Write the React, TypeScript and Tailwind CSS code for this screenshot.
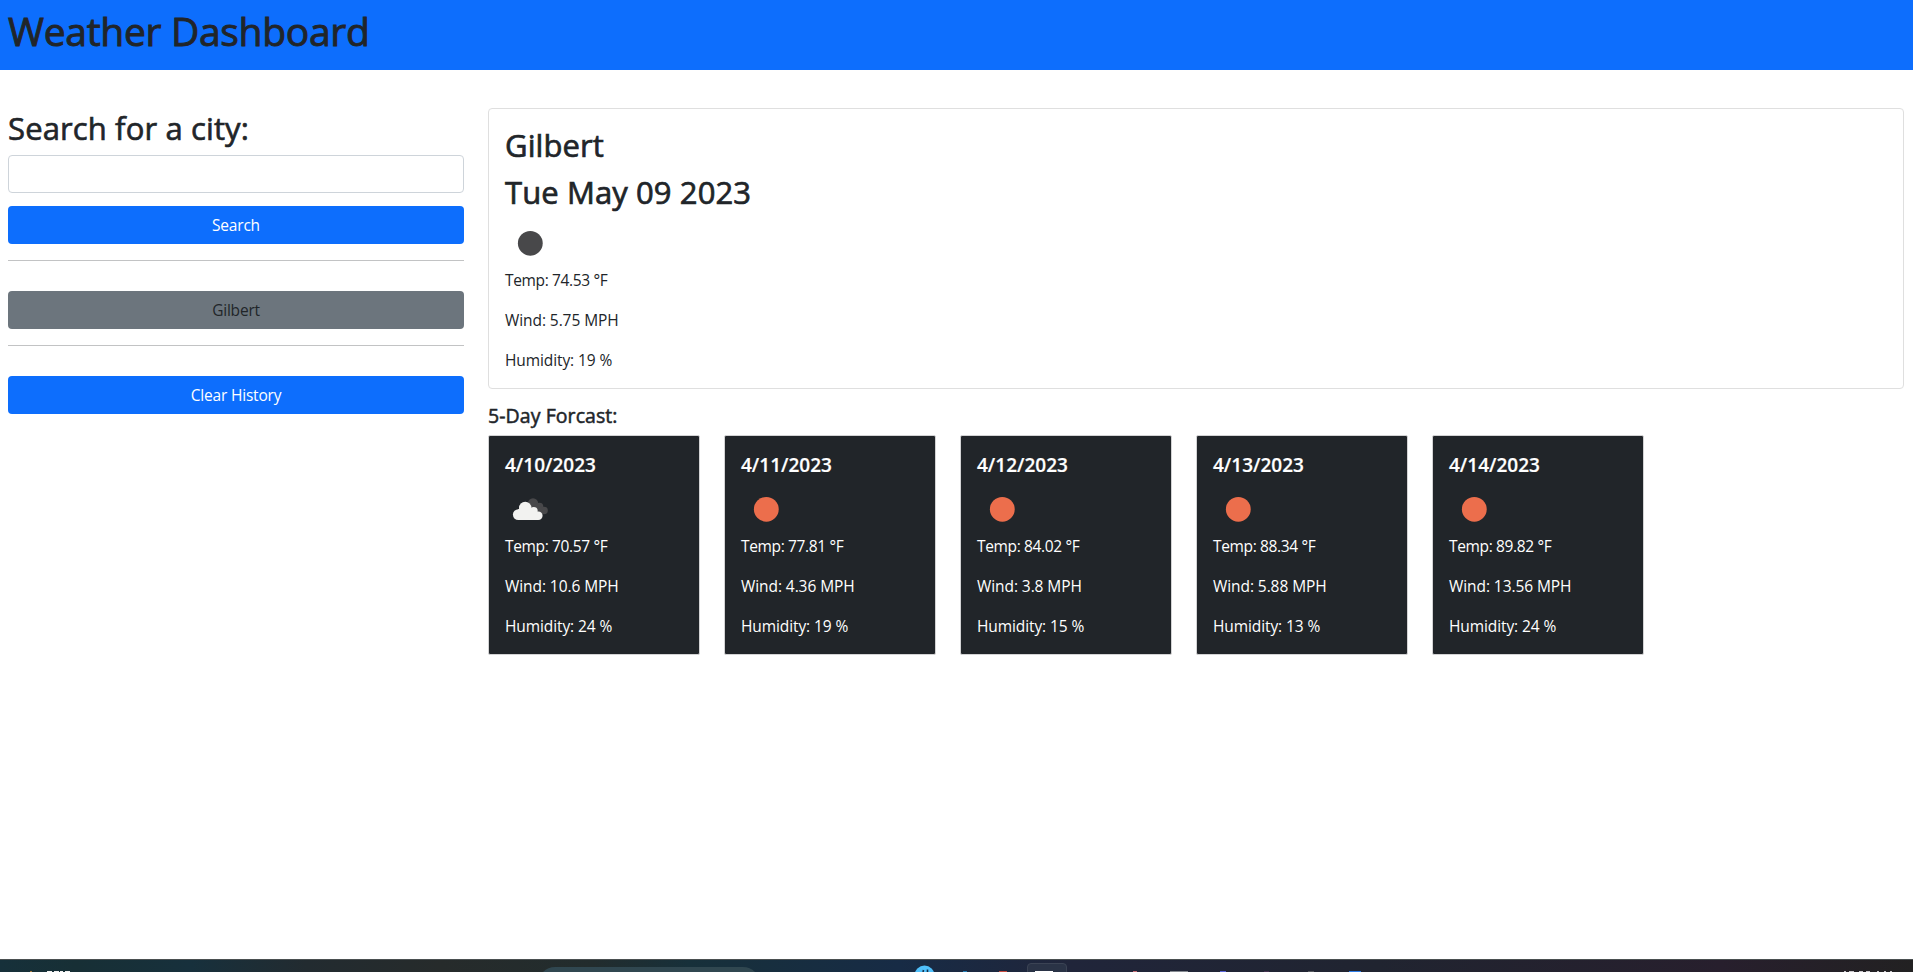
import React from "react";

type Sky = "moon" | "sun" | "clouds";

interface Day {
  date: string;
  sky: Sky;
  temp: string;
  wind: string;
  humidity: string;
}

const days: Day[] = [
  { date: "4/10/2023", sky: "clouds", temp: "70.57", wind: "10.6", humidity: "24" },
  { date: "4/11/2023", sky: "sun", temp: "77.81", wind: "4.36", humidity: "19" },
  { date: "4/12/2023", sky: "sun", temp: "84.02", wind: "3.8", humidity: "15" },
  { date: "4/13/2023", sky: "sun", temp: "88.34", wind: "5.88", humidity: "13" },
  { date: "4/14/2023", sky: "sun", temp: "89.82", wind: "13.56", humidity: "24" },
];

function SkyIcon({ sky }: { sky: Sky }) {
  return (
    <svg className="block size-[50px]" viewBox="0 0 50 50">
      {sky === "clouds" ? (
        <>
          <g fill="#48484a">
            <circle cx="28" cy="19.5" r="5.2" />
            <circle cx="34.5" cy="22.5" r="3.8" />
            <circle cx="39" cy="26.5" r="3.8" />
            <path d="M26 20h9l4 10h-8z" />
          </g>
          <g fill="#f2f2f0">
            <circle cx="13.3" cy="30.6" r="5.4" />
            <circle cx="20.2" cy="23.9" r="6.2" />
            <circle cx="28.7" cy="27" r="4" />
            <circle cx="33.4" cy="31.8" r="4.2" />
            <path d="M13 25.300l12-1 8 4v7.700H13z" />
          </g>
        </>
      ) : (
        <circle cx="25.3" cy="25.3" r="12.4" fill={sky === "sun" ? "#ec6e4c" : "#48484a"} />
      )}
    </svg>
  );
}

function Readings({ temp, wind, humidity }: Pick<Day, "temp" | "wind" | "humidity">) {
  return (
    <div className="flex flex-col gap-4 text-[15.5px] leading-6">
      <p className="tracking-[-0.36px]">Temp: {temp} °F</p>
      <p className="tracking-[-0.08px]">Wind: {wind} MPH</p>
      <p className="tracking-[-0.1px]">Humidity: {humidity} %</p>
    </div>
  );
}

function Taskbar() {
  return (
    <footer className="h-[13px] shrink-0 overflow-hidden border-t border-[#4a4f50] bg-[#202430]">
      <svg className="block h-3 w-[1913px]" viewBox="0 0 1913 12">
        <defs>
          <linearGradient id="bar">
            <stop offset="0" stopColor="#16303a" />
            <stop offset="0.04" stopColor="#172f35" />
            <stop offset="0.1" stopColor="#17303c" />
            <stop offset="0.16" stopColor="#222b30" />
            <stop offset="0.23" stopColor="#262b2b" />
            <stop offset="0.31" stopColor="#222c2d" />
            <stop offset="0.36" stopColor="#17303a" />
            <stop offset="0.47" stopColor="#172b45" />
            <stop offset="0.56" stopColor="#20253a" />
            <stop offset="0.72" stopColor="#202430" />
            <stop offset="0.9" stopColor="#271f2d" />
            <stop offset="1" stopColor="#222122" />
          </linearGradient>
        </defs>
        <rect width="1913" height="12" fill="url(#bar)" />
        <path d="M543 12Q548 7 555 7H743Q750 7 755 12Z" fill="#304750" />
        <path d="M30 11h2v1h-2z" fill="#a77b3f" />
        <path d="M47 11h5v1h-5zM54 11h5v1h-5zM60 11h3v1h-3zM65 11h5v1h-5z" fill="#f1f1f1" />
        <circle cx="924.5" cy="15.5" r="10" fill="#4fc0fb" />
        <path d="M923 12l.5-2M927.500 12v-2.500" stroke="#15304a" strokeWidth="1.6" />
        <path d="M963 11h4v1h-4z" fill="#2781b8" />
        <path d="M999 11h8v1h-8z" fill="#c94c40" />
        <path d="M1027.500 12V7Q1027.500 3.500 1031 3.500H1063Q1066.500 3.500 1066.500 7V12" fill="#2a3346" stroke="#3b4354" />
        <path d="M1035 11h18v1h-18z" fill="#fff" />
        <path d="M1133 11h4v1h-4z" fill="#c66f77" />
        <path d="M1170 11h18v1h-18z" fill="#858a91" />
        <path d="M1220 11h6v1h-6z" fill="#5964d9" />
        <path d="M1264 11h5v1h-5z" fill="#44304f" />
        <path d="M1308 11h6v1h-6z" fill="#55585e" />
        <path d="M1349 11h12v1h-12z" fill="#2d7de8" />
        <path d="M1844 11h2v1h-2zM1849 11h5v1h-5zM1859 11h4v1h-4zM1866 11h4v1h-4zM1877 11h2v1h-2zM1884 11h2v1h-2zM1890 11h2v1h-2z" fill="#c9c6ca" />
      </svg>
    </footer>
  );
}

export default function App() {
  return (
    <div className="flex h-[972px] w-[1913px] flex-col overflow-hidden bg-white font-['Open_Sans',sans-serif] text-[#212529]">
      <header className="h-[70px] shrink-0 bg-[#0d6efd] px-2 pt-[7px]">
        <h1 className="text-[39px] leading-[48px] font-medium tracking-[-0.3px] [-webkit-text-stroke:0.9px_#212529]">Weather Dashboard</h1>
      </header>

      <main className="flex min-h-0 flex-1 gap-6 px-2 pt-[38px]">
        <aside className="w-[456px] shrink-0">
          <h2 className="pt-[1px] text-[31px] leading-[38px] font-medium tracking-[0.13px] [-webkit-text-stroke:0.65px_#212529]">Search for a city:</h2>
          <input aria-label="City" className="mt-2 block h-[38px] w-full rounded border border-[#ced4da] bg-white px-3" />
          <button className="mt-[13px] block h-[38px] w-full rounded bg-[#0d6efd] pt-[2px] text-[15.5px] tracking-[-0.2px] text-white">Search</button>
          <hr className="mt-4 border-[#c2c3c4]" />
          <button className="mt-[30px] block h-[38px] w-full rounded bg-[#6c757d] pt-[2px] text-[15.5px] tracking-[-0.2px]">Gilbert</button>
          <hr className="mt-4 border-[#c2c3c4]" />
          <button className="mt-[30px] block h-[38px] w-full rounded bg-[#0d6efd] pt-[2px] text-[15.5px] tracking-[-0.2px] text-white">Clear History</button>
        </aside>

        <section className="w-[1416px]">
          <article className="h-[281px] rounded border border-[#dfdfdf] px-4 pt-[17px]">
            <h2 className="text-[31px] leading-[38px] font-medium tracking-[0.1px] [-webkit-text-stroke:0.7px_#212529]">Gilbert</h2>
            <h2 className="mt-[9px] text-[31px] leading-[39px] font-medium tracking-[0.1px] [-webkit-text-stroke:0.7px_#212529]">Tue May 09 2023</h2>
            <div className="mt-[6px]">
              <SkyIcon sky="moon" />
            </div>
            <Readings temp="74.53" wind="5.75" humidity="19" />
          </article>

          <h3 className="mt-[15px] text-[19.5px] leading-6 font-medium tracking-[0.07px] [-webkit-text-stroke:0.5px_#212529]">5-Day Forcast:</h3>
          <div className="mt-[7px] flex gap-6">
            {days.map((day) => (
              <article key={day.date} className="h-[220px] w-[212px] rounded-xs border border-[#d3d3d4] bg-[#212529] px-4 pt-[17px] text-white">
                <h4 className="text-[19px] leading-6 font-semibold [-webkit-text-stroke:0.2px_#fff]">{day.date}</h4>
                <div className="mt-[7px]">
                  <SkyIcon sky={day.sky} />
                </div>
                <Readings temp={day.temp} wind={day.wind} humidity={day.humidity} />
              </article>
            ))}
          </div>
        </section>
      </main>

      <Taskbar />
    </div>
  );
}
